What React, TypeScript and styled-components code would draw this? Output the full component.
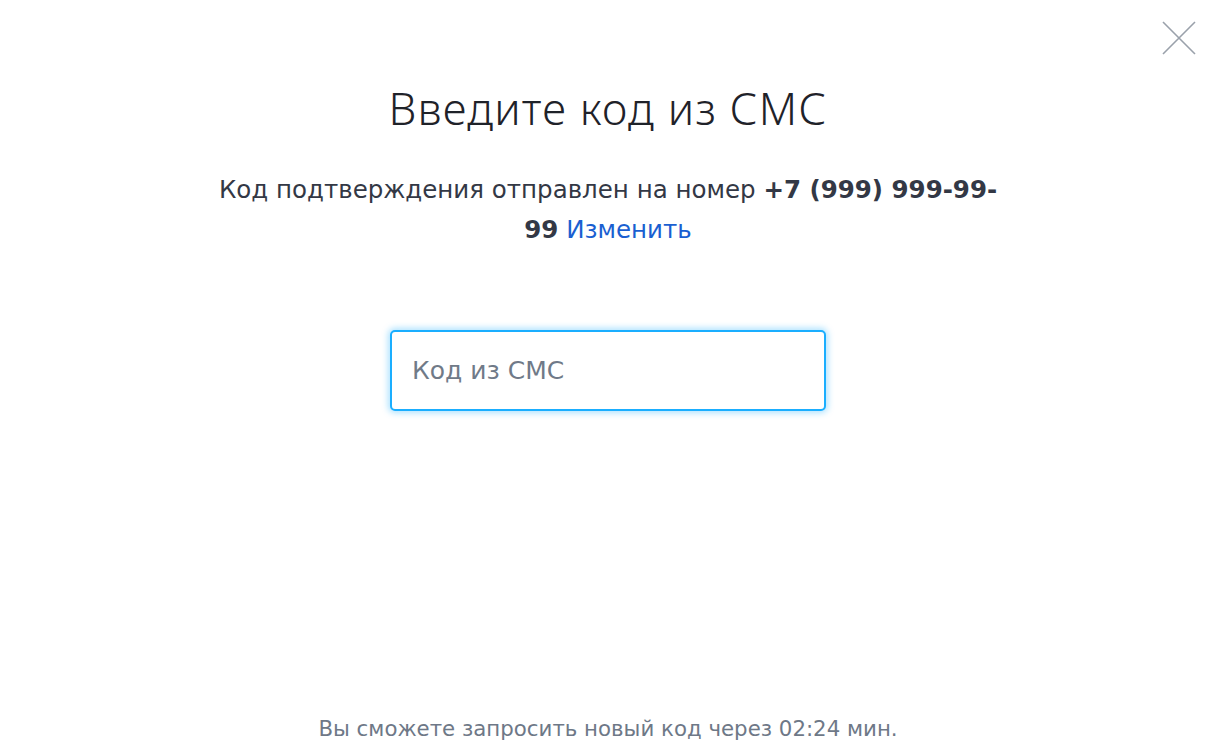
import React from 'react';
import styled, { createGlobalStyle } from 'styled-components';

const GlobalStyle = createGlobalStyle`
  html, body {
    margin: 0;
    padding: 0;
    background: #ffffff;
  }
  body {
    font-family: 'DejaVu Sans', 'Noto Sans', Arial, sans-serif;
    color: #333845;
  }
`;

const App: React.FC = () => {
  return (
    <Page>
      <GlobalStyle />
      <CloseButton aria-label="Закрыть">
        <svg width="34" height="34" viewBox="0 0 34 34">
          <path d="M1 1 L33 33 M33 1 L1 33" stroke="#9aa1ab" strokeWidth="1.6" fill="none" />
        </svg>
      </CloseButton>

      <Title>Введите код из СМС</Title>
      <Subtitle>
        Код подтверждения отправлен на номер <Phone>+7 (999) 999-99-99</Phone>{' '}
        <ChangeLink href="#">Изменить</ChangeLink>
      </Subtitle>

      <CodeInput placeholder="Код из СМС" autoFocus />

      <Footer>Вы сможете запросить новый код через 02:24 мин.</Footer>
    </Page>
  );
};

const Page = styled.div`
  position: relative;
  height: 756px;
  box-sizing: border-box;
  display: flex;
  flex-direction: column;
  align-items: center;
  padding-top: 78px;
`;

const CloseButton = styled.button`
  position: absolute;
  top: 21px;
  right: 20px;
  width: 34px;
  height: 34px;
  padding: 0;
  border: none;
  background: none;
  cursor: pointer;
`;

const Title = styled.h1`
  margin: 0;
  font-family: 'Noto Sans', 'Open Sans', sans-serif;
  font-size: 44px;
  font-weight: 300;
  letter-spacing: 1.2px;
  line-height: 60px;
  color: #1f2229;
`;

const Subtitle = styled.p`
  margin: 32px 0 0;
  width: 792px;
  text-align: center;
  font-size: 24.5px;
  line-height: 40px;
  color: #333845;
`;

const Phone = styled.b`
  font-weight: 700;
`;

const ChangeLink = styled.a`
  color: #1a5fd1;
  text-decoration: none;
`;

const CodeInput = styled.input`
  margin-top: 80px;
  width: 436px;
  height: 81px;
  box-sizing: border-box;
  padding: 0 20px;
  border: 2px solid #1aaeff;
  border-radius: 5px;
  box-shadow: 0 0 6px 2px rgba(26, 174, 255, 0.35);
  outline: none;
  font-family: inherit;
  font-size: 25px;
  color: #333845;
  caret-color: #1f2229;

  &::placeholder {
    color: #707a88;
  }
`;

const Footer = styled.div`
  margin-top: auto;
  padding-bottom: 12px;
  font-size: 21.3px;
  line-height: 30px;
  color: #6e7887;
`;

export default App;
